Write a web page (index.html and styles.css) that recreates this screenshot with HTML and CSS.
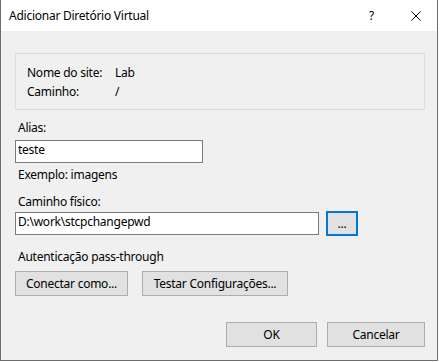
FILE: index.html
```html
<!DOCTYPE html>
<html lang="pt">
<head>
<meta charset="utf-8">
<link rel="stylesheet" href="styles.css">
</head>
<body>
<div class="window">
  <div class="titlebar">
    <span class="title">Adicionar Diretório Virtual</span>
    <span class="help">?</span>
    <svg class="close" width="10" height="10" viewBox="0 0 10 10"><path d="M0.5 0.5 L9.5 9.5 M9.5 0.5 L0.5 9.5" stroke="#000" stroke-width="1" fill="none"/></svg>
  </div>
  <div class="content">
    <div class="group">
      <div class="inforow"><span class="ilabel">Nome do site:</span><span>Lab</span></div>
      <div class="inforow"><span class="ilabel">Caminho:</span><span>/</span></div>
    </div>
    <div class="label alias-label">Alias:</div>
    <div class="input alias-input">teste</div>
    <div class="label example">Exemplo: imagens</div>
    <div class="label path-label">Caminho físico:</div>
    <div class="pathrow">
      <div class="input path-input">D:\work\stcpchangepwd</div>
      <div class="btn browse">...</div>
    </div>
    <div class="label auth-label">Autenticação pass-through</div>
    <div class="btnrow">
      <div class="btn connect">Conectar como...</div>
      <div class="btn test">Testar Configurações...</div>
    </div>
    <div class="footer">
      <div class="btn ok">OK</div>
      <div class="btn cancel">Cancelar</div>
    </div>
  </div>
</div>
</body>
</html>
```
FILE: styles.css
```css
html, body {
  margin: 0;
  padding: 0;
  background: #ffffff;
}
body {
  font-family: "Noto Sans", "Open Sans", sans-serif;
  font-size: 12px;
  letter-spacing: -0.25px;
  color: #000;
}
.window {
  box-sizing: border-box;
  width: 438px;
  height: 361px;
  background: #f0f0f0;
  border-left: 1px solid #6d6d6d;
  border-right: 1px solid #6d6d6d;
  border-bottom: 1px solid #6d6d6d;
  display: flex;
  flex-direction: column;
}
.titlebar {
  height: 31px;
  background: #ffffff;
  display: flex;
  align-items: center;
  flex-shrink: 0;
}
.title {
  margin-left: 8px;
  flex: 1;
}
.help {
  margin-right: 37px;
}
.close {
  display: block;
  margin-right: 16px;
  margin-top: 1px;
}
.content {
  padding: 22px 12px 0 14px;
  display: flex;
  flex-direction: column;
  align-items: flex-start;
}
.group {
  box-sizing: border-box;
  width: 410px;
  height: 57px;
  border: 1px solid #dcdcdc;
  padding: 9px 11px 0;
}
.inforow {
  display: flex;
  line-height: 19px;
  height: 19px;
}
.ilabel {
  width: 88px;
}
.label {
  line-height: 16px;
  height: 16px;
  margin-left: 3px;
}
.alias-label { margin-top: 10px; }
.input {
  box-sizing: border-box;
  background: #fff;
  border: 1px solid #7a7a7a;
  height: 23px;
  line-height: 18px;
  padding-left: 2px;
}
.alias-input {
  width: 188px;
  margin-top: 4px;
}
.example { margin-top: 4px; }
.path-label { margin-top: 11px; }
.pathrow {
  display: flex;
  margin-top: 1px;
  align-items: center;
}
.path-input { width: 304px; }
.btn {
  box-sizing: border-box;
  background: #e1e1e1;
  border: 1px solid #adadad;
  height: 25px;
  display: flex;
  align-items: center;
  justify-content: center;
}
.browse {
  width: 32px;
  height: 25px;
  margin-left: 7px;
  border: 2px solid #0078d7;
}
.auth-label { margin-top: 13px; }
.btnrow {
  display: flex;
  gap: 14px;
  margin-top: 6px;
}
.connect { width: 113px; }
.test { width: 146px; }
.footer {
  display: flex;
  gap: 10px;
  margin-top: 26px;
  align-self: flex-end;
}
.ok { width: 91px; }
.cancel { width: 98px; }
```
